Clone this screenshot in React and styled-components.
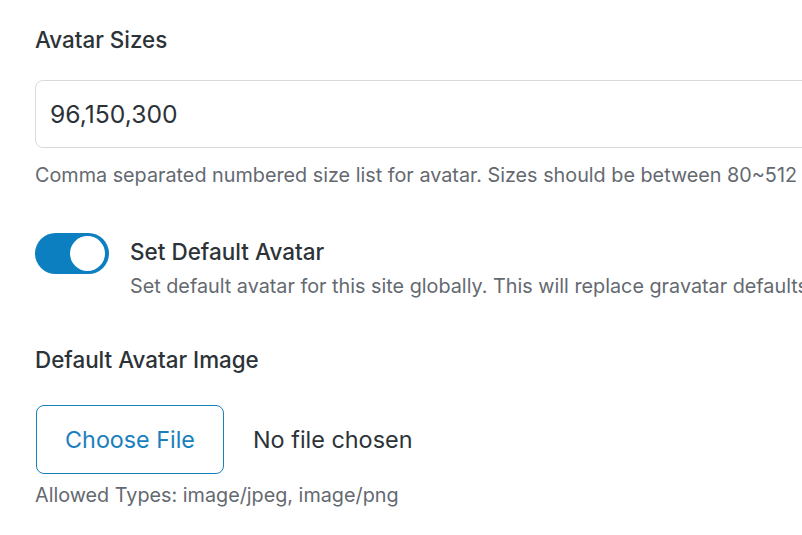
import React, { useState } from 'react';
import styled, { createGlobalStyle } from 'styled-components';

const GlobalStyle = createGlobalStyle`
  html, body {
    margin: 0;
    padding: 0;
    background: #fff;
    overflow: hidden;
  }
  body {
    font-family: Inter, "Noto Sans", "Liberation Sans", sans-serif;
    color: #2c3338;
  }
`;

const Page = styled.div`
  width: 1100px;
  padding: 25px 0 0 35px;
  box-sizing: border-box;
`;

const Field = styled.div`
  display: flex;
  flex-direction: column;
  align-items: flex-start;
  margin-bottom: ${(p) => p.$gap || 0}px;
`;

const Label = styled.label`
  font-size: 22.4px;
  line-height: 30px;
  font-weight: 500;
  color: #2c3338;
  margin-bottom: ${(p) => p.$gap}px;
`;

const TextInput = styled.input`
  width: 1000px;
  height: 68px;
  box-sizing: border-box;
  border: 1px solid #d8dadd;
  border-radius: 8px;
  padding: 0 14px;
  font-family: inherit;
  font-size: 24.7px;
  color: #2c3338;
  outline: none;
`;

const Help = styled.p`
  margin: ${(p) => p.$top}px 0 0;
  font-size: 19.8px;
  line-height: 28px;
  color: #646970;
  white-space: nowrap;
`;

const ToggleRow = styled.div`
  display: flex;
  align-items: flex-start;
  gap: 21px;
  margin-bottom: 45px;
`;

const Switch = styled.button`
  flex: 0 0 auto;
  width: 74px;
  height: 41px;
  border: none;
  border-radius: 21px;
  background: ${(p) => (p.$on ? '#0b7fbf' : '#c3c4c7')};
  padding: 3px 4px;
  display: flex;
  justify-content: ${(p) => (p.$on ? 'flex-end' : 'flex-start')};
  cursor: pointer;
`;

const Knob = styled.span`
  width: 35px;
  height: 35px;
  border-radius: 50%;
  background: #fff;
`;

const ToggleText = styled.div`
  padding-top: 5px;
`;

const ToggleTitle = styled.div`
  font-size: 22.5px;
  line-height: 28px;
  font-weight: 500;
  color: #2c3338;
`;

const FileRow = styled.div`
  display: flex;
  align-items: center;
  gap: 29px;
`;

const FileButton = styled.button`
  width: 188px;
  height: 69px;
  margin-left: 1px;
  box-sizing: border-box;
  border: 1px solid #1a7fbd;
  border-radius: 8px;
  background: #fff;
  color: #1a7fbd;
  font-family: inherit;
  font-size: 23.3px;
  cursor: pointer;
`;

const FileName = styled.span`
  font-size: 23.4px;
  color: #2c3338;
`;

export default function App() {
  const [on, setOn] = useState(true);

  return (
    <>
      <GlobalStyle />
      <Page>
        <Field $gap={44}>
          <Label $gap={25}>Avatar Sizes</Label>
          <TextInput defaultValue="96,150,300" />
          <Help $top={13}>
            Comma separated numbered size list for avatar. Sizes should be between 80~512 pixels.
          </Help>
        </Field>

        <ToggleRow>
          <Switch $on={on} onClick={() => setOn(!on)}>
            <Knob />
          </Switch>
          <ToggleText>
            <ToggleTitle>Set Default Avatar</ToggleTitle>
            <Help $top={6}>
              Set default avatar for this site globally. This will replace gravatar defaults.
            </Help>
          </ToggleText>
        </ToggleRow>

        <Field>
          <Label $gap={30}>Default Avatar Image</Label>
          <FileRow>
            <FileButton>Choose File</FileButton>
            <FileName>No file chosen</FileName>
          </FileRow>
          <Help $top={7}>Allowed Types: image/jpeg, image/png</Help>
        </Field>
      </Page>
    </>
  );
}
